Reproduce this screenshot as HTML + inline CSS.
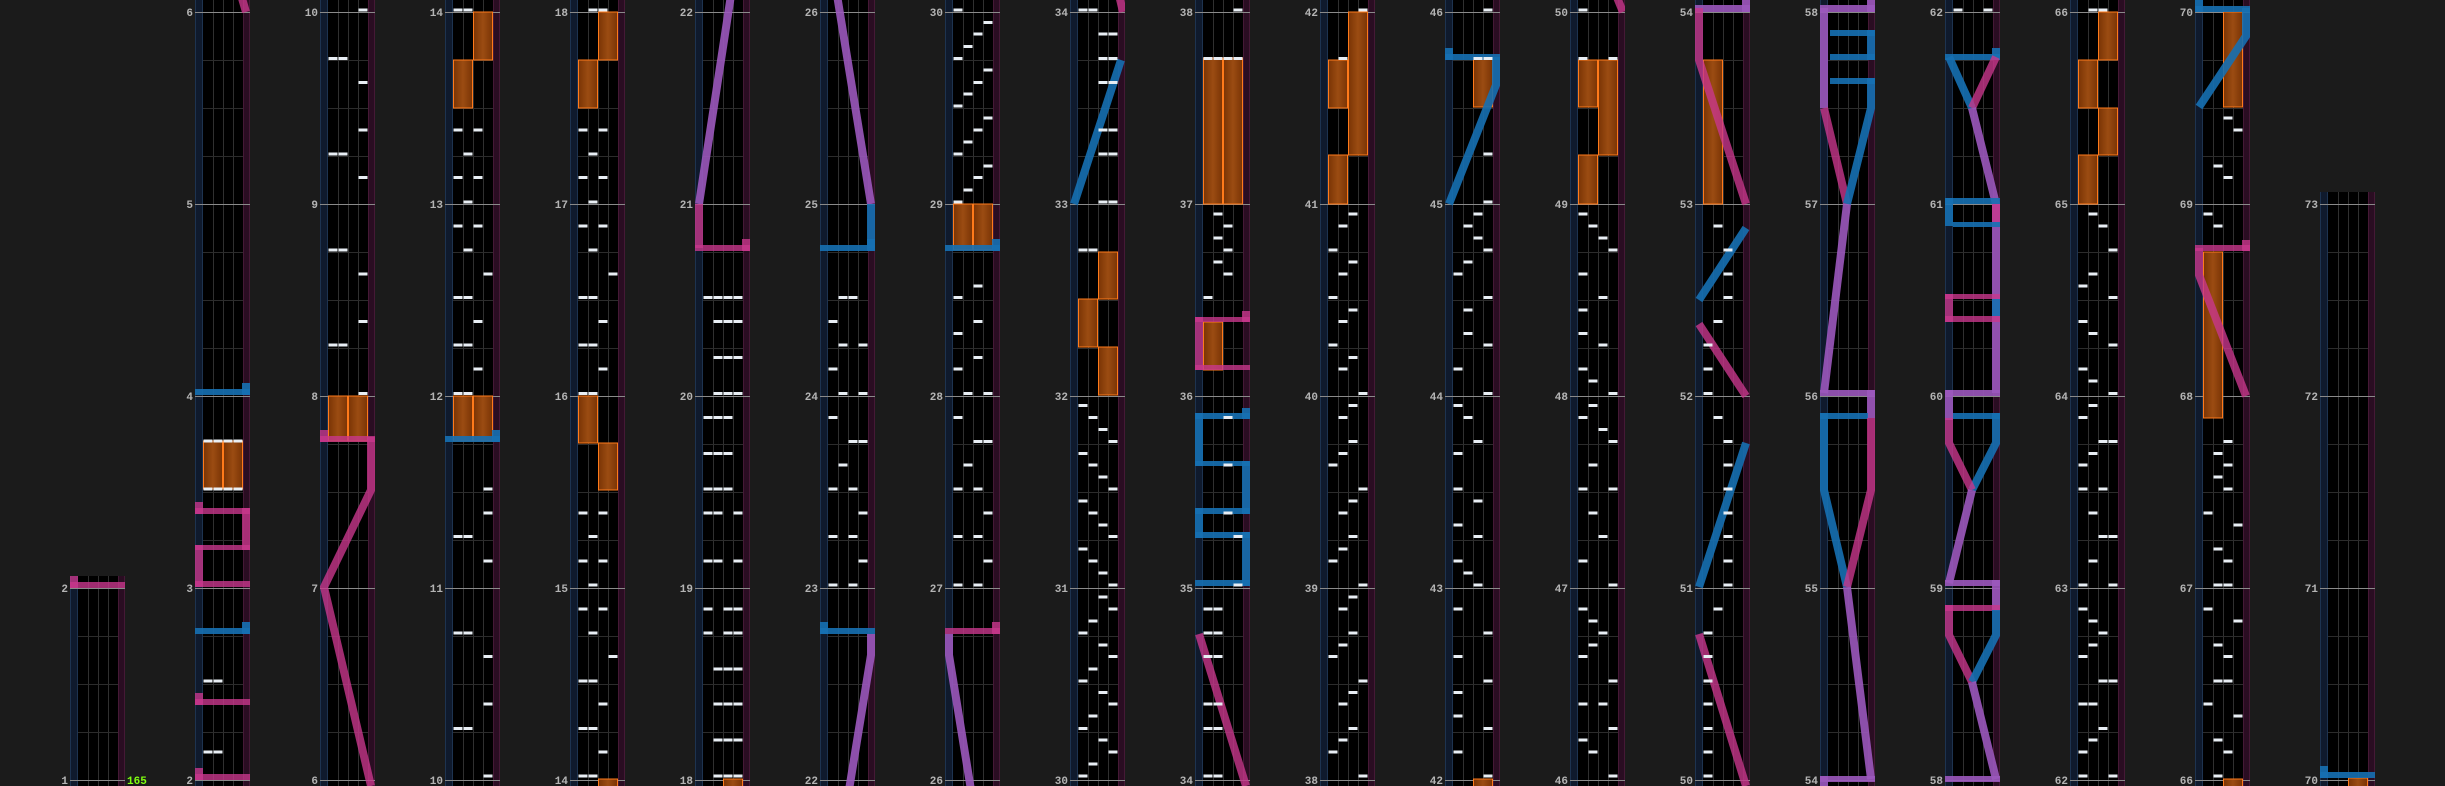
<!DOCTYPE html>
<html><head><meta charset="utf-8"><style>
html,body{margin:0;padding:0;background:#1b1b1b;overflow:hidden}
svg{display:block}
text{font-family:"Liberation Mono",monospace;font-weight:bold;font-size:11px;fill:#b4b4b4}
</style></head><body>
<svg id="s" width="2445" height="786" viewBox="0 0 2445 786" xmlns="http://www.w3.org/2000/svg">
<rect width="2445" height="786" fill="#1b1b1b"/>
<defs>
<linearGradient id="hg" x1="0" x2="1" y1="0" y2="0"><stop offset="0" stop-color="#7a3405"/><stop offset="0.5" stop-color="#9b4c12"/><stop offset="1" stop-color="#7a3405"/></linearGradient>
</defs>
<g id="cols"></g>
<g text-anchor="end">
<text x="68" y="592">2</text><text x="68" y="784">1</text>
<text x="193" y="16">6</text><text x="193" y="208">5</text><text x="193" y="400">4</text><text x="193" y="592">3</text><text x="193" y="784">2</text>
<text x="318" y="16">10</text><text x="318" y="208">9</text><text x="318" y="400">8</text><text x="318" y="592">7</text><text x="318" y="784">6</text>
<text x="443" y="16">14</text><text x="443" y="208">13</text><text x="443" y="400">12</text><text x="443" y="592">11</text><text x="443" y="784">10</text>
<text x="568" y="16">18</text><text x="568" y="208">17</text><text x="568" y="400">16</text><text x="568" y="592">15</text><text x="568" y="784">14</text>
<text x="693" y="16">22</text><text x="693" y="208">21</text><text x="693" y="400">20</text><text x="693" y="592">19</text><text x="693" y="784">18</text>
<text x="818" y="16">26</text><text x="818" y="208">25</text><text x="818" y="400">24</text><text x="818" y="592">23</text><text x="818" y="784">22</text>
<text x="943" y="16">30</text><text x="943" y="208">29</text><text x="943" y="400">28</text><text x="943" y="592">27</text><text x="943" y="784">26</text>
<text x="1068" y="16">34</text><text x="1068" y="208">33</text><text x="1068" y="400">32</text><text x="1068" y="592">31</text><text x="1068" y="784">30</text>
<text x="1193" y="16">38</text><text x="1193" y="208">37</text><text x="1193" y="400">36</text><text x="1193" y="592">35</text><text x="1193" y="784">34</text>
<text x="1318" y="16">42</text><text x="1318" y="208">41</text><text x="1318" y="400">40</text><text x="1318" y="592">39</text><text x="1318" y="784">38</text>
<text x="1443" y="16">46</text><text x="1443" y="208">45</text><text x="1443" y="400">44</text><text x="1443" y="592">43</text><text x="1443" y="784">42</text>
<text x="1568" y="16">50</text><text x="1568" y="208">49</text><text x="1568" y="400">48</text><text x="1568" y="592">47</text><text x="1568" y="784">46</text>
<text x="1693" y="16">54</text><text x="1693" y="208">53</text><text x="1693" y="400">52</text><text x="1693" y="592">51</text><text x="1693" y="784">50</text>
<text x="1818" y="16">58</text><text x="1818" y="208">57</text><text x="1818" y="400">56</text><text x="1818" y="592">55</text><text x="1818" y="784">54</text>
<text x="1943" y="16">62</text><text x="1943" y="208">61</text><text x="1943" y="400">60</text><text x="1943" y="592">59</text><text x="1943" y="784">58</text>
<text x="2068" y="16">66</text><text x="2068" y="208">65</text><text x="2068" y="400">64</text><text x="2068" y="592">63</text><text x="2068" y="784">62</text>
<text x="2193" y="16">70</text><text x="2193" y="208">69</text><text x="2193" y="400">68</text><text x="2193" y="592">67</text><text x="2193" y="784">66</text>
<text x="2318" y="208">73</text><text x="2318" y="400">72</text><text x="2318" y="592">71</text><text x="2318" y="784">70</text>
</g>
<text x="127" y="784" style="fill:#80ff10">165</text>
</svg>
<script>
var PK='rgba(200,55,140,0.8)',BL='rgba(22,112,178,0.9)',PU='rgba(155,88,188,0.9)';
var out='';
var C=[];
for(var c=0;c<19;c++)C.push({top:c==0?576:(c==18?192:0),g:''});
function R(c,x,y,w,h,col){C[c].g+='<rect x="'+x+'" y="'+y+'" width="'+w+'" height="'+h+'" fill="'+col+'"/>';}
function L(c,pts,col){C[c].g+='<polyline points="'+pts.map(function(p){return p.join(',')}).join(' ')+'" fill="none" stroke="'+col+'" stroke-width="8" stroke-linejoin="miter"/>';}
function H(c,side,y1,y2){var x=side=='L'?8.5:28.5;C[c].g+='<rect x="'+x+'" y="'+y1+'" width="19" height="'+(y2-y1)+'" fill="url(#hg)" stroke="#ff7a1a" stroke-width="1"/>';}
function S(c,y,col,box){R(c,0,y-6,55,6,col);R(c,box=='L'?0:47,y-12,8,12,col);}
var CH=[];
function K(c,s){CH.push([c,s]);}
function drawChips(c,s){s.split(',').forEach(function(e){var a=e.split(':');var y=a[0]/2;for(var i=0;i<a[1].length;i++){var x=8+(+a[1][i])*10+0.5;C[c].g+='<rect x="'+x+'" y="'+(y-1.5)+'" width="9" height="3" fill="#e8eef4"/>';}});}

// col0
R(0,0,576,8,12,PK);R(0,0,582,55,6,PK);
// col1
L(1,[[46,-5],[51,12]],PK);
S(1,780,PK,'L');S(1,705,PK,'L');S(1,634,BL,'R');S(1,395,BL,'R');
H(1,'L',441,489);H(1,'R',441,489);K(1,"882:0123,978:0123,1362:01,1504:01");
R(1,0,581,55,6,PK);R(1,0,545,8,42,PK);R(1,0,545,55,5,PK);R(1,47,508,8,42,PK);R(1,0,508,55,6,PK);R(1,0,502,8,12,PK);
// col2
K(2,"20:3,117:01,165:3,260:3,308:01,355:3,500:01,548:3,643:3,690:01,787:3");
H(2,'L',396,441);H(2,'R',396,441);
S(2,442,PK,'L');L(2,[[51,437],[51,490],[4,587],[51,786]],PK);
// col3
K(3,"20:01,260:02,308:1,355:02,404:1,452:02,500:1,548:3,595:01,643:2,690:01,738:2,787:01,978:3,1026:3,1073:01,1122:3,1266:01,1313:3,1408:3,1457:01,1552:3");
H(3,'R',12,60);H(3,'L',60,108);H(3,'L',396,441);H(3,'R',396,441);S(3,442,BL,'R');
// col4
K(4,"20:12,260:02,308:1,355:02,404:1,452:02,500:1,548:3,595:01,643:2,690:01,738:2,787:01,1026:02,1073:1,1122:02,1170:1,1218:02,1266:1,1313:3,1362:01,1408:2,1457:01,1504:2,1552:01");
H(4,'R',12,60);H(4,'L',60,108);H(4,'L',396,443);H(4,'R',443,490);H(4,'R',779,790);
// col5
L(5,[[36,-5],[4,204]],PU);L(5,[[4,204],[4,248]],PK);S(5,251,PK,'R');
K(5,"595:0123,643:123,715:123,787:123,835:012,907:012,978:012,1026:013,1122:013,1218:023,1266:023,1338:123,1408:123,1480:123,1552:123");
H(5,'R',779,790);
// col6
L(6,[[17,-5],[51,204]],PU);L(6,[[51,204],[51,248]],BL);S(6,251,BL,'R');
K(6,"595:12,643:0,690:13,738:0,787:13,835:0,883:23,930:1,978:02,1026:3,1073:02,1122:3,1170:02");
S(6,634,BL,'L');L(6,[[51,634],[51,655],[29,790]],PU);
// col7
K(7,"20:0,45:3,68:2,93:1,117:0,140:3,165:2,188:1,212:0,236:3,260:2,284:1,308:0,332:3,355:2,380:1,404:0,572:2,595:0,643:2,667:0,715:2,738:0,787:13,835:0,883:23,930:1,978:02,1026:3,1073:02,1122:3,1170:02");
H(7,'L',204,250);H(7,'R',204,250);S(7,251,BL,'R');S(7,634,PK,'R');L(7,[[4,634],[4,655],[26,790]],PU);
// col8
L(8,[[49,-5],[53,12]],PK);
K(8,"20:01,68:23,117:23,165:23,260:23,308:23,404:23,500:01,811:0,835:1,859:2,883:3,907:0,930:1,954:2,978:3,1002:0,1026:1,1050:2,1073:3,1098:0,1122:1,1146:2,1170:3,1194:2,1218:3,1242:1,1266:0,1290:2,1313:3,1338:1,1362:0,1385:2,1408:3,1432:1,1457:0,1480:2,1504:3,1528:1,1552:0");
L(8,[[4,204],[51,60]],BL);H(8,'R',252,299);H(8,'L',299,347);H(8,'R',347,395);
// col9
K(9,"20:3,117:0123,428:1,452:2,476:1,500:2,524:1,548:2,595:0,835:2,930:2,1026:2,1073:3,1170:3,1218:01,1266:01,1313:01,1408:01,1457:01,1552:01");
H(9,'L',58,204);H(9,'R',58,204);H(9,'L',322,370);
R(9,0,317,8,53,PK);R(9,0,317,55,5,PK);R(9,47,311,8,11,PK);R(9,0,365,55,5,PK);
R(9,47,408,8,11,BL);R(9,0,413,55,6,BL);R(9,0,413,8,53,BL);R(9,0,461,55,5,BL);R(9,47,461,8,53,BL);R(9,0,508,55,6,BL);R(9,0,508,8,30,BL);R(9,0,532,55,6,BL);R(9,47,532,8,54,BL);R(9,0,580,55,6,BL);
L(9,[[4,634],[51,786]],PK);
// col10
H(10,'R',12,155);H(10,'L',60,108);H(10,'L',155,204);
K(10,"20:3,117:1,428:2,452:1,500:0,524:2,548:1,595:0,620:2,643:1,690:0,715:2,738:1,787:3,811:2,835:1,883:2,907:1,930:0,978:3,1002:2,1026:1,1073:2,1098:1,1122:0,1170:3,1194:2,1218:1,1266:2,1290:1,1313:0,1362:3,1385:2,1408:1,1457:2,1480:1,1504:0,1552:3");
// col11
H(11,'R',58,107);H(11,'R',779,790);
K(11,"20:3,117:23,308:3,404:3,428:2,452:1,476:2,500:3,524:1,548:0,595:3,620:1,667:1,690:3,738:0,787:3,811:0,835:1,883:2,907:0,978:0,1002:2,1050:0,1073:2,1122:0,1146:1,1170:2,1218:0,1266:3,1313:0,1362:3,1385:0,1432:0,1457:3,1504:0,1552:3");
R(11,0,48,8,12,BL);R(11,0,54,55,6,BL);L(11,[[51,57],[51,85],[4,204]],BL);
// col12
L(12,[[46,-5],[53,12]],PK);
H(12,'L',60,107);H(12,'R',60,155);H(12,'L',155,204);
K(12,"20:0,117:03,428:0,452:1,476:2,500:3,548:0,595:2,620:0,667:0,690:2,738:0,762:1,787:3,811:1,835:0,859:2,883:3,930:1,978:03,1026:1,1073:2,1122:0,1170:3,1218:0,1242:1,1266:2,1290:1,1313:0,1362:3,1408:02,1457:3,1480:0,1504:1,1552:3");
// col13
H(13,'L',60,204);
R(13,0,5,55,7,PU);R(13,47,0,8,12,PU);
L(13,[[4,8],[4,60],[51,204]],PK);L(13,[[4,300],[51,228]],BL);L(13,[[4,324],[51,396]],PK);L(13,[[4,587],[51,443]],BL);L(13,[[4,634],[51,786]],PK);
K(13,"452:1,500:2,548:2,595:2,643:1,690:0,738:0,787:0,835:1,883:2,930:2,978:2,1026:2,1073:2,1122:2,1170:2,1218:1,1266:0,1313:0,1362:0,1408:0,1457:0,1504:0,1552:0");
// col14
R(14,0,5,55,7,PU);R(14,47,0,8,12,PU);
L(14,[[4,8],[4,108]],PU);L(14,[[4,108],[27,204]],PK);
R(14,10,30,45,6,BL);R(14,47,30,8,30,BL);R(14,10,54,45,6,BL);R(14,10,78,45,6,BL);
L(14,[[51,78],[51,108],[27,204]],BL);L(14,[[27,204],[4,393]],PU);
R(14,0,390,55,6,PU);R(14,47,390,8,28,PU);
R(14,0,413,48,6,BL);L(14,[[4,413],[4,490],[27,587]],BL);L(14,[[51,418],[51,490],[27,587]],PK);
L(14,[[27,587],[51,779]],PU);R(14,0,776,55,6,PU);R(14,0,776,8,10,PU);
// col15
K(15,"20:03");
R(15,0,54,55,6,BL);R(15,47,48,8,12,BL);
L(15,[[4,57],[27,108]],BL);L(15,[[51,57],[27,108]],PK);L(15,[[27,108],[51,204],[51,393]],PU);
R(15,0,198,55,6,BL);R(15,0,198,8,28,BL);R(15,8,222,47,5,BL);R(15,47,204,8,18,PK);
R(15,0,294,8,28,PK);R(15,0,294,55,5,PK);R(15,0,316,55,6,PK);R(15,47,299,8,17,BL);
R(15,0,390,55,6,PU);R(15,0,390,8,30,PU);
R(15,8,413,47,6,BL);L(15,[[51,413],[51,443],[27,490]],BL);L(15,[[4,418],[4,443],[27,490]],PK);
L(15,[[27,490],[4,583]],PU);R(15,0,580,55,6,PU);R(15,47,580,8,30,PU);
R(15,0,605,55,6,PK);L(15,[[4,605],[4,635],[27,682]],PK);L(15,[[51,610],[51,635],[27,682]],BL);
L(15,[[27,682],[51,779]],PU);R(15,0,776,55,6,PU);
// col16
H(16,'R',12,60);H(16,'L',60,108);H(16,'R',108,155);H(16,'L',155,204);
K(16,"20:12,428:1,452:2,500:3,548:1,572:0,595:3,643:0,667:1,690:3,738:0,762:1,787:3,811:1,835:0,883:23,907:1,930:0,978:02,1026:1,1073:23,1122:1,1170:03,1218:0,1242:1,1266:2,1290:1,1313:0,1362:23,1408:01,1457:2,1480:1,1504:0,1552:03");
// col17
H(17,'R',12,107);H(17,'L',252,418);H(17,'R',779,790);
R(17,0,0,8,12,BL);R(17,0,6,55,6,BL);L(17,[[4,107],[51,36],[51,8]],BL);
K(17,"236:2,260:3,332:1,355:2,428:0,452:1,883:2,907:1,930:2,954:1,978:2,1026:0,1050:3,1098:1,1122:2,1170:12,1218:0,1242:3,1290:1,1313:2,1362:12,1408:0,1432:3,1480:1,1504:2,1552:1");
R(17,0,245,55,6,PK);R(17,47,240,8,11,PK);L(17,[[4,248],[4,275],[51,396]],PK);
// col18
H(18,'R',778,790);R(18,0,766,8,12,BL);R(18,0,772,55,6,BL);

CH.forEach(function(a){drawChips(a[0],a[1]);});

for(var c=0;c<19;c++){
  var X=70+125*c,T=C[c].top,Hh=786-T;
  var base='<rect x="0" y="'+T+'" width="55" height="'+Hh+'" fill="#000"/>'+
   '<rect x="0" y="'+T+'" width="8" height="'+Hh+'" fill="#0f1a2d"/>'+
   '<rect x="0" y="'+T+'" width="1" height="'+Hh+'" fill="#1d3350"/><rect x="7" y="'+T+'" width="1" height="'+Hh+'" fill="#1d3350"/>'+
   '<rect x="48" y="'+T+'" width="7" height="'+Hh+'" fill="#2a0d22"/>'+
   '<rect x="48" y="'+T+'" width="1" height="'+Hh+'" fill="#451936"/><rect x="54" y="'+T+'" width="1" height="'+Hh+'" fill="#451936"/>';
  for(var lx=18;lx<=38;lx+=10)base+='<rect x="'+lx+'" y="'+T+'" width="1" height="'+Hh+'" fill="#303030"/>';
  for(var k=0;k<=16;k++){var y=12+48*k;if(y<T)continue;
    if(k%4==0)base+='<rect x="0" y="'+y+'" width="55" height="1" fill="#8a8a8a"/>';
    else base+='<rect x="8" y="'+y+'" width="40" height="1" fill="#2c2c2c"/>';}
  out+='<clipPath id="cp'+c+'"><rect x="0" y="'+T+'" width="55" height="'+Hh+'"/></clipPath>';
  out+='<g transform="translate('+X+',0)" clip-path="url(#cp'+c+')">'+base+C[c].g+'</g>';
}
document.getElementById('cols').innerHTML=out;
</script>
</body></html>
